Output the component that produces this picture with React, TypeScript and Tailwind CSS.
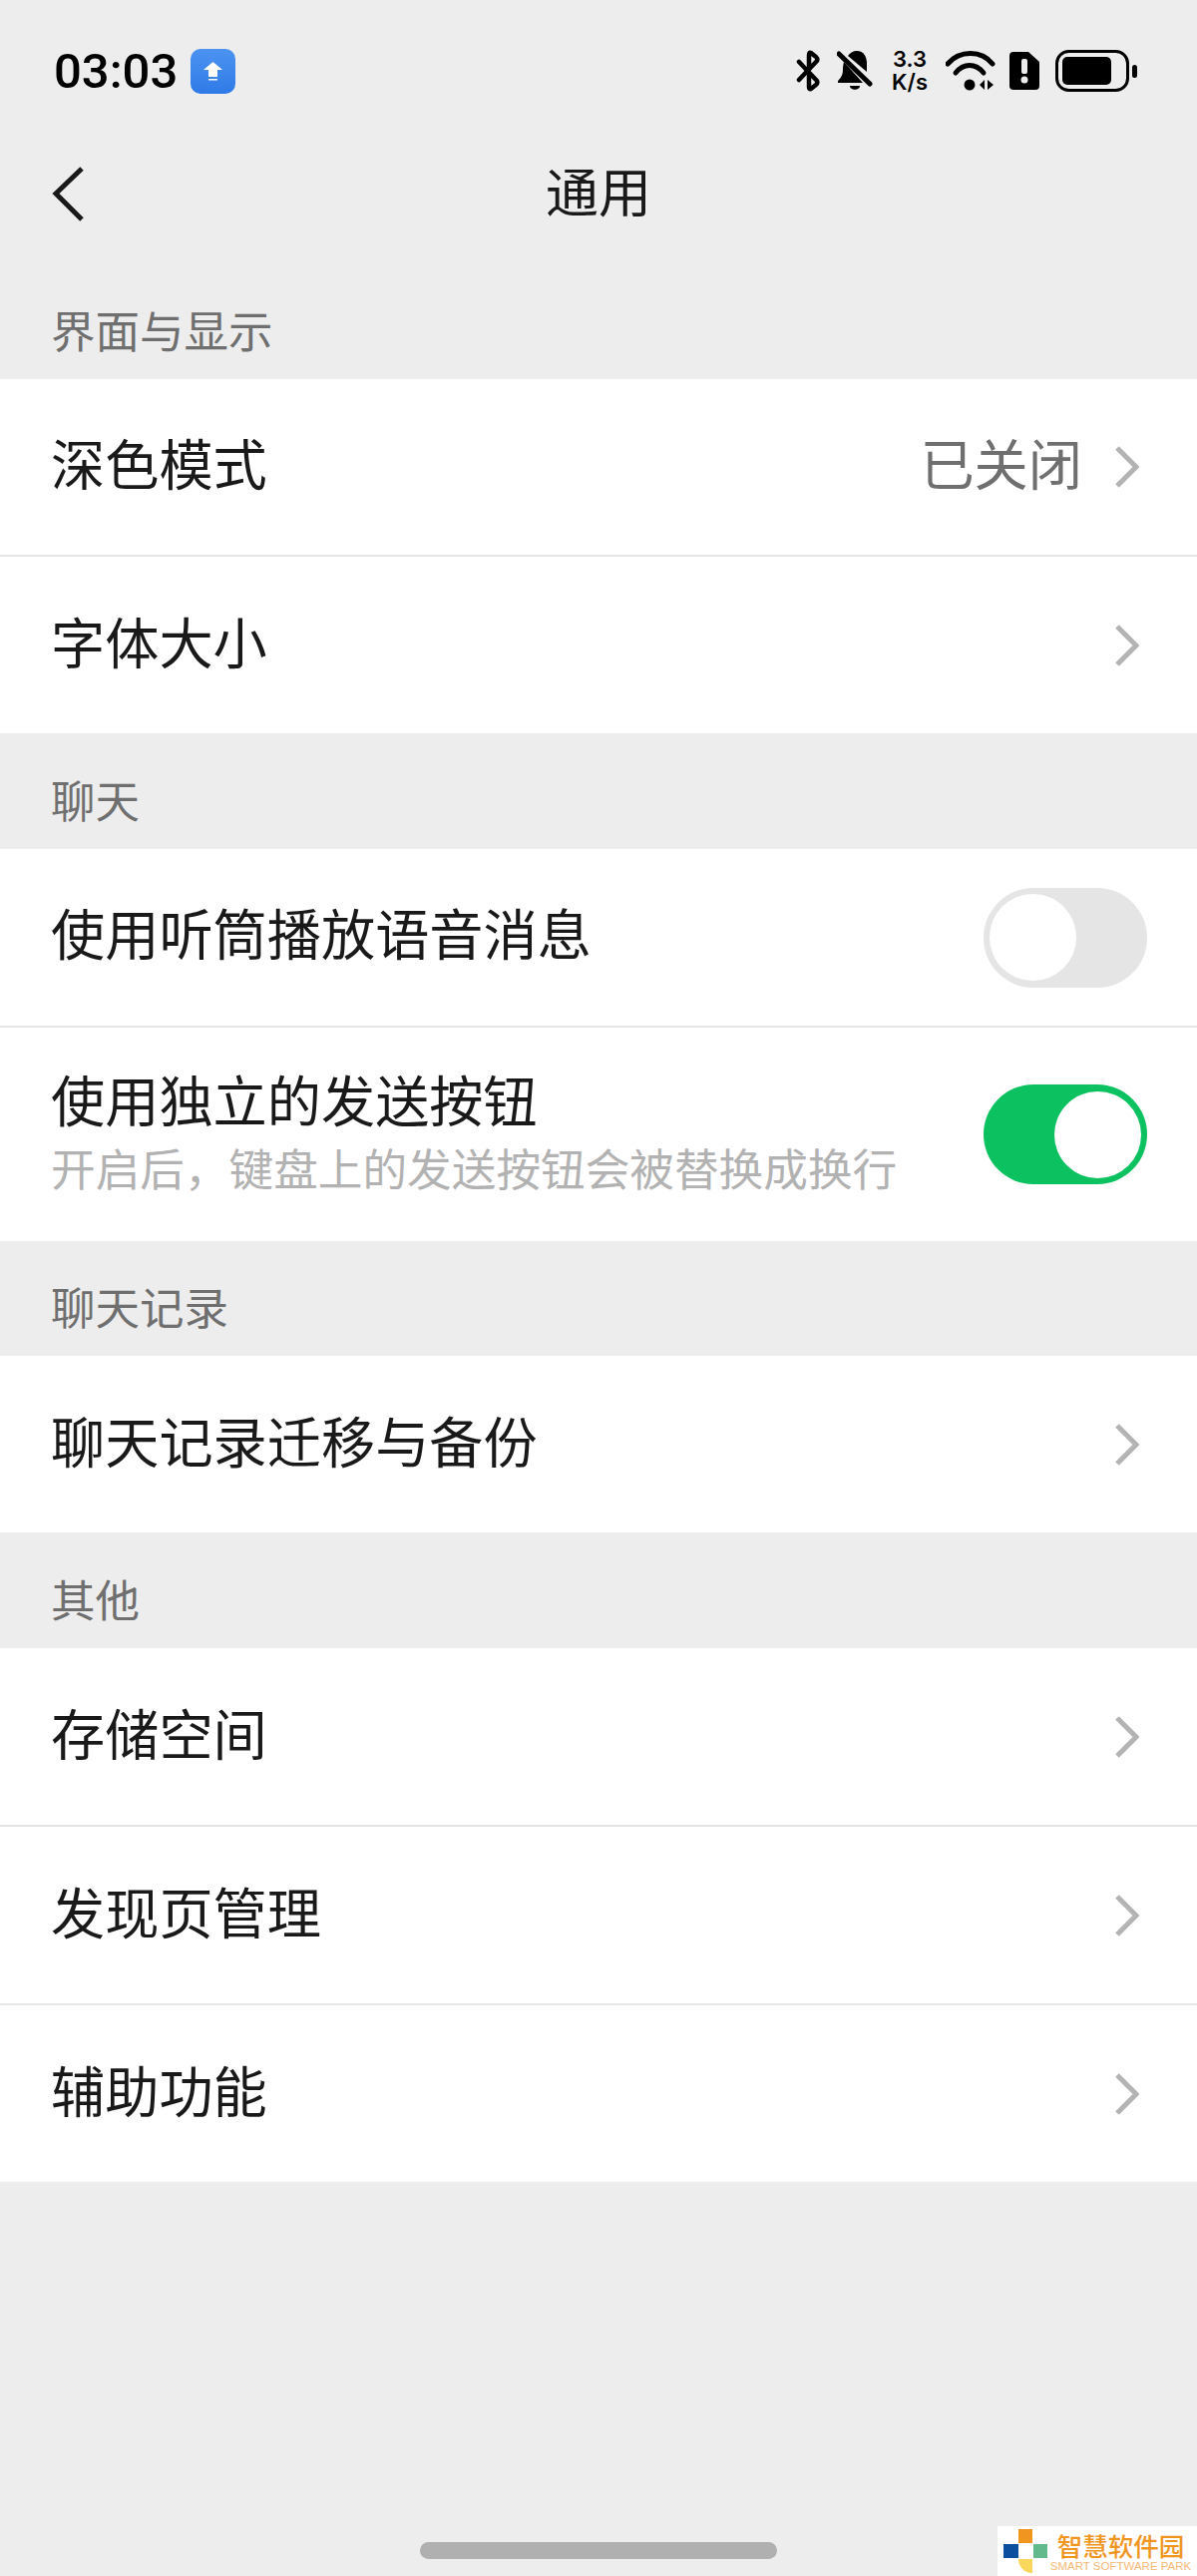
import React from "react";

const cjk = "font-['Noto_Sans_CJK_SC','Noto_Sans',sans-serif]";

const Chevron = () => (
  <svg width="24" height="44" viewBox="0 0 24 44" fill="none" className="shrink-0">
    <path d="M2 3 L21 22 L2 41" stroke="#b3b3b3" strokeWidth="5" />
  </svg>
);

const Toggle = ({ on }: { on: boolean }) => (
  <div
    className={`flex h-[100px] w-[164px] items-center rounded-full px-[6px] ${
      on ? "justify-end bg-[#0cc160]" : "justify-start bg-[#e5e5e5]"
    }`}
  >
    <div className="size-[87px] rounded-full bg-white" />
  </div>
);

const Row = ({
  label,
  value,
  sub,
  toggle,
  height = "h-[177px]",
  textPad = "pb-[10px]",
}: {
  label: string;
  value?: string;
  sub?: string;
  toggle?: boolean;
  height?: string;
  textPad?: string;
}) => (
  <div className={`flex items-center justify-between pl-[51px] ${toggle === undefined ? "pr-[58px]" : "pr-[50px]"} ${height}`}>
    <div className={`flex flex-col ${textPad}`}>
      <span className="text-[54.2px] leading-[70px] text-[#191919]">{label}</span>
      {sub && <span className="mt-[4px] text-[44.65px] leading-[60px] text-[#b2b2b2]">{sub}</span>}
    </div>
    {toggle !== undefined ? (
      <Toggle on={toggle} />
    ) : (
      <div className="flex items-center gap-[33px]">
        {value && <span className="pb-[10px] text-[54.2px] leading-[70px] text-[#6f6f6f]">{value}</span>}
        <Chevron />
      </div>
    )}
  </div>
);

const Divider = () => <div className="h-[2px] bg-[#e5e5e5]" />;

const SectionTitle = ({ children, height }: { children: string; height: string }) => (
  <div className={`flex items-end pb-[20px] pl-[51px] text-[44.5px] leading-[60px] text-[#6f6f6f] ${height}`}>
    {children}
  </div>
);

const Group = ({ children }: { children: React.ReactNode }) => <div className="bg-white">{children}</div>;

const Bluetooth = () => (
  <svg width="24" height="42" viewBox="0 0 24 42" fill="none" stroke="#000" strokeWidth="4.5" strokeLinejoin="round" strokeLinecap="round">
    <path d="M3 12 L21 31 Q22 33 20 35 L15 39 Q13 40 13 37 V24" />
    <path d="M3 30 L21 11 Q22 9 20 7 L15 3 Q13 2 13 5 V18" />
  </svg>
);

const BellOff = () => (
  <svg width="36" height="42" viewBox="0 0 36 42">
    <path d="M7 12 C7 12 6 16 6 20 C6 26 3 29 1 31 V33 H26 Z" fill="#000" />
    <path d="M11 6 C13 3 16 1 20 1 C27 1 30 7 30 14 V22 Z" fill="#000" />
    <path d="M13 36 H23 C23 41 13 41 13 36 Z" fill="#000" />
    <path d="M2 4 L33 34" stroke="#000" strokeWidth="5" strokeLinecap="round" />
  </svg>
);

const Wifi = () => (
  <svg width="50" height="40" viewBox="0 0 50 40" fill="none">
    <path d="M2 13 C14 -1 36 -1 47 13" stroke="#000" strokeWidth="5" strokeLinecap="round" />
    <path d="M10 22 C18 12 30 12 38 22" stroke="#000" strokeWidth="5" strokeLinecap="round" />
    <circle cx="24" cy="34" r="5.5" fill="#000" />
    <path d="M34 34 L39 29 V39 Z M42 29 L48 34 L42 39 Z" fill="#000" />
  </svg>
);

const SimAlert = () => (
  <svg width="30" height="38" viewBox="0 0 30 38">
    <path d="M4 0 H19 L30 10 V34 Q30 38 26 38 H4 Q0 38 0 34 V4 Q0 0 4 0 Z" fill="#000" />
    <rect x="12" y="7" width="6" height="15" rx="2" fill="#ededed" />
    <circle cx="15" cy="28" r="3.5" fill="#ededed" />
  </svg>
);

const Battery = () => (
  <svg width="83" height="42" viewBox="0 0 83 42">
    <rect x="1.5" y="1.5" width="71" height="39" rx="12" fill="none" stroke="#000" strokeWidth="3" />
    <rect x="7" y="7" width="49" height="28" rx="5" fill="#000" />
    <rect x="77" y="15" width="5" height="13" rx="2.5" fill="#000" />
  </svg>
);

const Watermark = () => (
  <div className="absolute right-0 bottom-0 flex h-[50px] w-[200px] items-center bg-white pl-[6px]">
    <svg width="44" height="44" viewBox="0 0 44 44" className="shrink-0">
      <rect x="15" y="0" width="14" height="14" fill="#f0951f" />
      <rect x="0" y="15" width="15" height="14" fill="#0b4f9e" />
      <rect x="30" y="15" width="14" height="14" fill="#63b98c" />
      <path d="M15 30 H29 V44 C21 44 15 38 15 30 Z" fill="#f9d65c" />
    </svg>
    <div className="ml-[3px] flex w-[141px] flex-col items-center">
      <span className="text-[25.5px] leading-[30px] font-medium whitespace-nowrap text-[#f0951f]">智慧软件园</span>
      <span className="font-['Liberation_Sans',sans-serif] text-[11.5px] leading-[13px] whitespace-nowrap text-[#f5b975]">SMART SOFTWARE PARK</span>
    </div>
  </div>
);

export default function App() {
  return (
    <div className={`relative h-[2582px] w-[1200px] overflow-hidden bg-[#ededed] ${cjk}`}>
      {/* status bar */}
      <div className="flex h-[130px] items-center justify-between pt-[12px] pr-[59px] pl-[54px]">
        <div className="flex items-center gap-[13px]">
          <span className="font-['Roboto',sans-serif] text-[49px] leading-none font-medium text-black">03:03</span>
          <div className="flex size-[45px] items-center justify-center rounded-[10px] bg-gradient-to-b from-[#4c93f0] to-[#2f7ae8]">
            <svg width="19" height="19" viewBox="0 0 19 19" fill="#fff">
              <path d="M9.5 0 L19 8 H14 V15 H5 V8 H0 Z" />
              <rect x="5" y="17" width="9" height="1.5" />
            </svg>
          </div>
        </div>
        <div className="flex items-center">
          <Bluetooth />
          <div className="ml-[17px]">
            <BellOff />
          </div>
          <div className="ml-[19px] flex flex-col items-center font-['Inter',sans-serif] text-[22px] leading-[23px] font-semibold text-black">
            <span>3.3</span>
            <span>K/s</span>
          </div>
          <div className="ml-[18px]">
            <Wifi />
          </div>
          <div className="ml-[14px]">
            <SimAlert />
          </div>
          <div className="ml-[16px]">
            <Battery />
          </div>
        </div>
      </div>

      {/* nav bar */}
      <div className="relative flex h-[126px] items-center justify-center">
        <span className="pb-[6px] text-[53px] leading-none text-[#191919]">通用</span>
        <svg width="34" height="58" viewBox="0 0 34 58" fill="none" className="absolute top-[36px] left-[52px]">
          <path d="M30 3 L4 28 L30 54" stroke="#191919" strokeWidth="5" />
        </svg>
      </div>

      <SectionTitle height="h-[124px]">界面与显示</SectionTitle>
      <Group>
        <Row label="深色模式" value="已关闭" height="h-[176px]" />
        <Divider />
        <Row label="字体大小" />
      </Group>

      <SectionTitle height="h-[116px]">聊天</SectionTitle>
      <Group>
        <Row label="使用听筒播放语音消息" toggle={false} textPad="pb-[12px]" />
        <Divider />
        <Row label="使用独立的发送按钮" sub="开启后，键盘上的发送按钮会被替换成换行" toggle height="h-[214px]" textPad="pb-[8px]" />
      </Group>

      <SectionTitle height="h-[115px]">聊天记录</SectionTitle>
      <Group>
        <Row label="聊天记录迁移与备份" />
      </Group>

      <SectionTitle height="h-[116px]">其他</SectionTitle>
      <Group>
        <Row label="存储空间" />
        <Divider />
        <Row label="发现页管理" />
        <Divider />
        <Row label="辅助功能" />
      </Group>

      {/* home indicator */}
      <div className="absolute bottom-[17px] left-[421px] h-[17px] w-[358px] rounded-full bg-[#b0b0b0]" />
      <Watermark />
    </div>
  );
}
